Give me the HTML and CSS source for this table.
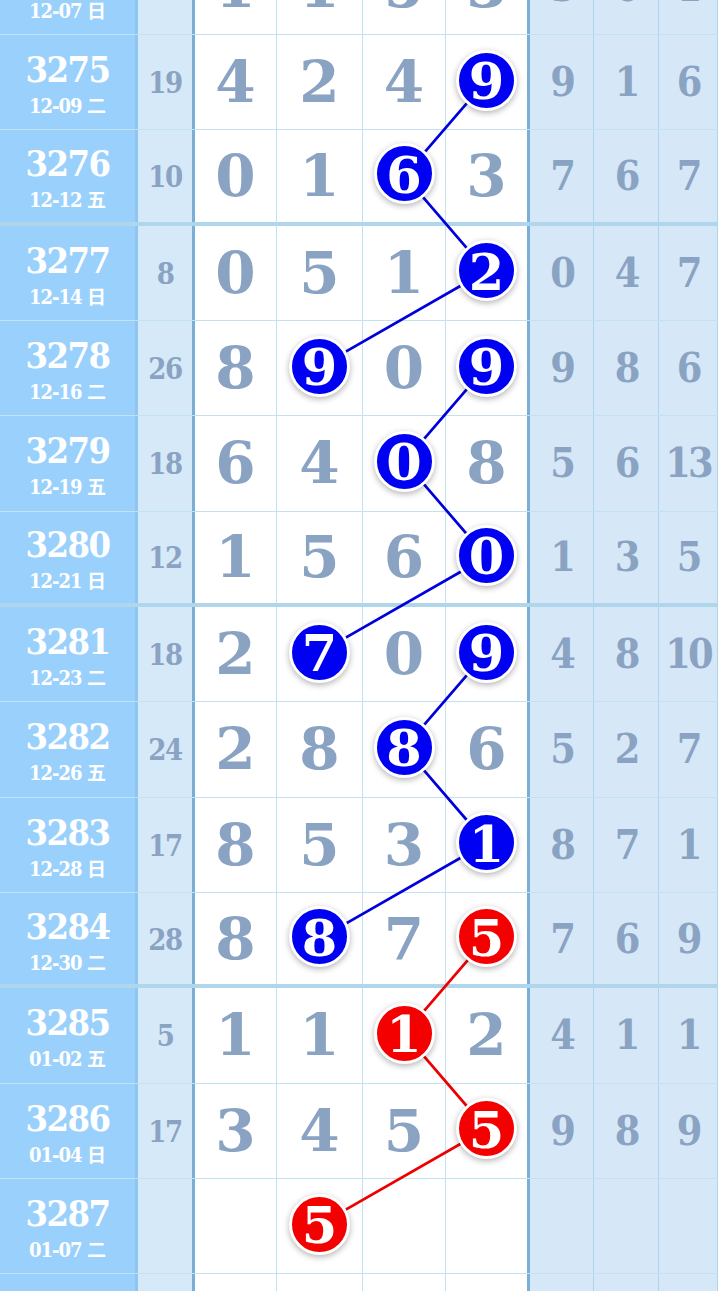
FILE: index.html
```html
<!DOCTYPE html>
<html lang="zh">
<head>
<meta charset="utf-8">
<title>走势图</title>
<link rel="stylesheet" href="styles.css">
</head>
<body>
<div class="chart">
  <svg class="links" width="718" height="1400" viewBox="0 0 718 1400">
    <g class="blue">
      <line x1="486.5" y1="140.3" x2="404.5" y2="235.7"/>
      <line x1="404.5" y1="235.7" x2="486.5" y2="331"/>
      <line x1="486.5" y1="331" x2="320" y2="426.3"/>
      <line x1="486.5" y1="426.3" x2="404.5" y2="521.7"/>
      <line x1="404.5" y1="521.7" x2="486.5" y2="617"/>
      <line x1="486.5" y1="617" x2="320" y2="712.3"/>
      <line x1="486.5" y1="712.3" x2="404.5" y2="807.7"/>
      <line x1="404.5" y1="807.7" x2="486.5" y2="903"/>
      <line x1="486.5" y1="903" x2="320" y2="998.3"/>
    </g>
    <g class="red">
      <line x1="486.5" y1="998.3" x2="404.5" y2="1093.7"/>
      <line x1="404.5" y1="1093.7" x2="486.5" y2="1189"/>
      <line x1="486.5" y1="1189" x2="320" y2="1284.3"/>
    </g>
  </svg>

  <div class="row">
    <div class="c issue"><div class="no">3274</div><div class="dt">12-07 <span class="wk">日</span></div></div>
    <div class="c sum">16</div>
    <div class="c n">1</div><div class="c n">1</div><div class="c n">5</div><div class="c n last">3</div>
    <div class="c r">3</div><div class="c r">0</div><div class="c r">1</div>
  </div>

  <div class="row">
    <div class="c issue"><div class="no">3275</div><div class="dt">12-09 <span class="wk">二</span></div></div>
    <div class="c sum">19</div>
    <div class="c n">4</div><div class="c n">2</div><div class="c n">4</div><div class="c n last"><span class="ball">9</span></div>
    <div class="c r">9</div><div class="c r">1</div><div class="c r">6</div>
  </div>

  <div class="row g">
    <div class="c issue"><div class="no">3276</div><div class="dt">12-12 <span class="wk">五</span></div></div>
    <div class="c sum">10</div>
    <div class="c n">0</div><div class="c n">1</div><div class="c n"><span class="ball">6</span></div><div class="c n last">3</div>
    <div class="c r">7</div><div class="c r">6</div><div class="c r">7</div>
  </div>

  <div class="row">
    <div class="c issue"><div class="no">3277</div><div class="dt">12-14 <span class="wk">日</span></div></div>
    <div class="c sum">8</div>
    <div class="c n">0</div><div class="c n">5</div><div class="c n">1</div><div class="c n last"><span class="ball">2</span></div>
    <div class="c r">0</div><div class="c r">4</div><div class="c r">7</div>
  </div>

  <div class="row">
    <div class="c issue"><div class="no">3278</div><div class="dt">12-16 <span class="wk">二</span></div></div>
    <div class="c sum">26</div>
    <div class="c n">8</div><div class="c n"><span class="ball">9</span></div><div class="c n">0</div><div class="c n last"><span class="ball">9</span></div>
    <div class="c r">9</div><div class="c r">8</div><div class="c r">6</div>
  </div>

  <div class="row">
    <div class="c issue"><div class="no">3279</div><div class="dt">12-19 <span class="wk">五</span></div></div>
    <div class="c sum">18</div>
    <div class="c n">6</div><div class="c n">4</div><div class="c n"><span class="ball">0</span></div><div class="c n last">8</div>
    <div class="c r">5</div><div class="c r">6</div><div class="c r">13</div>
  </div>

  <div class="row g">
    <div class="c issue"><div class="no">3280</div><div class="dt">12-21 <span class="wk">日</span></div></div>
    <div class="c sum">12</div>
    <div class="c n">1</div><div class="c n">5</div><div class="c n">6</div><div class="c n last"><span class="ball">0</span></div>
    <div class="c r">1</div><div class="c r">3</div><div class="c r">5</div>
  </div>

  <div class="row">
    <div class="c issue"><div class="no">3281</div><div class="dt">12-23 <span class="wk">二</span></div></div>
    <div class="c sum">18</div>
    <div class="c n">2</div><div class="c n"><span class="ball">7</span></div><div class="c n">0</div><div class="c n last"><span class="ball">9</span></div>
    <div class="c r">4</div><div class="c r">8</div><div class="c r">10</div>
  </div>

  <div class="row">
    <div class="c issue"><div class="no">3282</div><div class="dt">12-26 <span class="wk">五</span></div></div>
    <div class="c sum">24</div>
    <div class="c n">2</div><div class="c n">8</div><div class="c n"><span class="ball">8</span></div><div class="c n last">6</div>
    <div class="c r">5</div><div class="c r">2</div><div class="c r">7</div>
  </div>

  <div class="row">
    <div class="c issue"><div class="no">3283</div><div class="dt">12-28 <span class="wk">日</span></div></div>
    <div class="c sum">17</div>
    <div class="c n">8</div><div class="c n">5</div><div class="c n">3</div><div class="c n last"><span class="ball">1</span></div>
    <div class="c r">8</div><div class="c r">7</div><div class="c r">1</div>
  </div>

  <div class="row g">
    <div class="c issue"><div class="no">3284</div><div class="dt">12-30 <span class="wk">二</span></div></div>
    <div class="c sum">28</div>
    <div class="c n">8</div><div class="c n"><span class="ball">8</span></div><div class="c n">7</div><div class="c n last"><span class="ball red">5</span></div>
    <div class="c r">7</div><div class="c r">6</div><div class="c r">9</div>
  </div>

  <div class="row">
    <div class="c issue"><div class="no">3285</div><div class="dt">01-02 <span class="wk">五</span></div></div>
    <div class="c sum">5</div>
    <div class="c n">1</div><div class="c n">1</div><div class="c n"><span class="ball red">1</span></div><div class="c n last">2</div>
    <div class="c r">4</div><div class="c r">1</div><div class="c r">1</div>
  </div>

  <div class="row">
    <div class="c issue"><div class="no">3286</div><div class="dt">01-04 <span class="wk">日</span></div></div>
    <div class="c sum">17</div>
    <div class="c n">3</div><div class="c n">4</div><div class="c n">5</div><div class="c n last"><span class="ball red">5</span></div>
    <div class="c r">9</div><div class="c r">8</div><div class="c r">9</div>
  </div>

  <div class="row">
    <div class="c issue"><div class="no">3287</div><div class="dt">01-07 <span class="wk">二</span></div></div>
    <div class="c sum"></div>
    <div class="c n"></div><div class="c n"><span class="ball red">5</span></div><div class="c n"></div><div class="c n last"></div>
    <div class="c r"></div><div class="c r"></div><div class="c r"></div>
  </div>

  <div class="row">
    <div class="c issue"></div>
    <div class="c sum"></div>
    <div class="c n"></div><div class="c n"></div><div class="c n"></div><div class="c n last"></div>
    <div class="c r"></div><div class="c r"></div><div class="c r"></div>
  </div>
</div>
</body>
</html>
```

FILE: styles.css
```css
html, body {
  margin: 0;
  padding: 0;
  background: #ffffff;
  overflow: hidden;
}

.chart {
  position: relative;
  width: 718px;
  margin-top: -60.33px;
  overflow: hidden;
  font-family: "DejaVu Serif", "Noto Sans CJK SC", serif;
  font-weight: bold;
}

.links {
  position: absolute;
  left: 0;
  top: 0;
  z-index: 0;
  pointer-events: none;
}

.links line {
  stroke-width: 2.7;
  stroke-linecap: round;
}

.links .blue line { stroke: #0000dc; }
.links .red line { stroke: #ee0000; }

.row {
  display: grid;
  grid-template-columns: 138px 57px 82px 86px 83px 84px 64px 65px 59px;
  height: 95.333px;
  box-sizing: border-box;
  border-bottom: 1px solid rgba(110, 185, 222, 0.42);
}

.row.g {
  border-bottom: 4px solid rgba(110, 180, 218, 0.55);
}

.c {
  display: flex;
  align-items: center;
  justify-content: center;
  box-sizing: border-box;
  min-width: 0;
  color: #8aa3c2;
}

.issue {
  flex-direction: column;
  background: #9ad0fc;
  border-right: 3px solid #8cc6f1;
  color: #ffffff;
  padding-top: 6px;
  font-stretch: condensed;
}

.issue .no {
  font-size: 36px;
  line-height: 38px;
  letter-spacing: -1.5px;
}

.issue .dt {
  margin-top: 3px;
  font-size: 20px;
  line-height: 28px;
  letter-spacing: -1px;
  white-space: nowrap;
}

.issue .wk {
  font-family: "Noto Sans CJK SC", sans-serif;
  font-weight: bold;
  font-size: 19px;
  letter-spacing: 0;
}

.sum {
  background: #d6e9f9;
  border-right: 3px solid #79aed5;
  font-size: 29px;
  letter-spacing: -1.5px;
  padding-top: 2px;
  font-stretch: condensed;
}

.n {
  background: #ffffff;
  border-right: 1px solid rgba(110, 185, 222, 0.42);
  font-size: 58px;
}

.n.last {
  border-right: 3px solid #79aed5;
}

.r {
  background: #d6e8f8;
  border-right: 1px solid rgba(110, 175, 215, 0.38);
  font-size: 41px;
  letter-spacing: -3px;
  font-stretch: condensed;
}

.ball {
  position: relative;
  z-index: 1;
  width: 61px;
  height: 61px;
  box-sizing: border-box;
  margin-bottom: 4px;
  border-radius: 50%;
  border: 3px solid #ffffff;
  background: #0000f2;
  box-shadow: 0 2px 6px rgba(0, 0, 0, 0.3);
  color: #ffffff;
  display: flex;
  align-items: center;
  justify-content: center;
  font-size: 51px;
  line-height: 1;
  padding-top: 3px;
}

.ball.red {
  background: #f40000;
}
```
